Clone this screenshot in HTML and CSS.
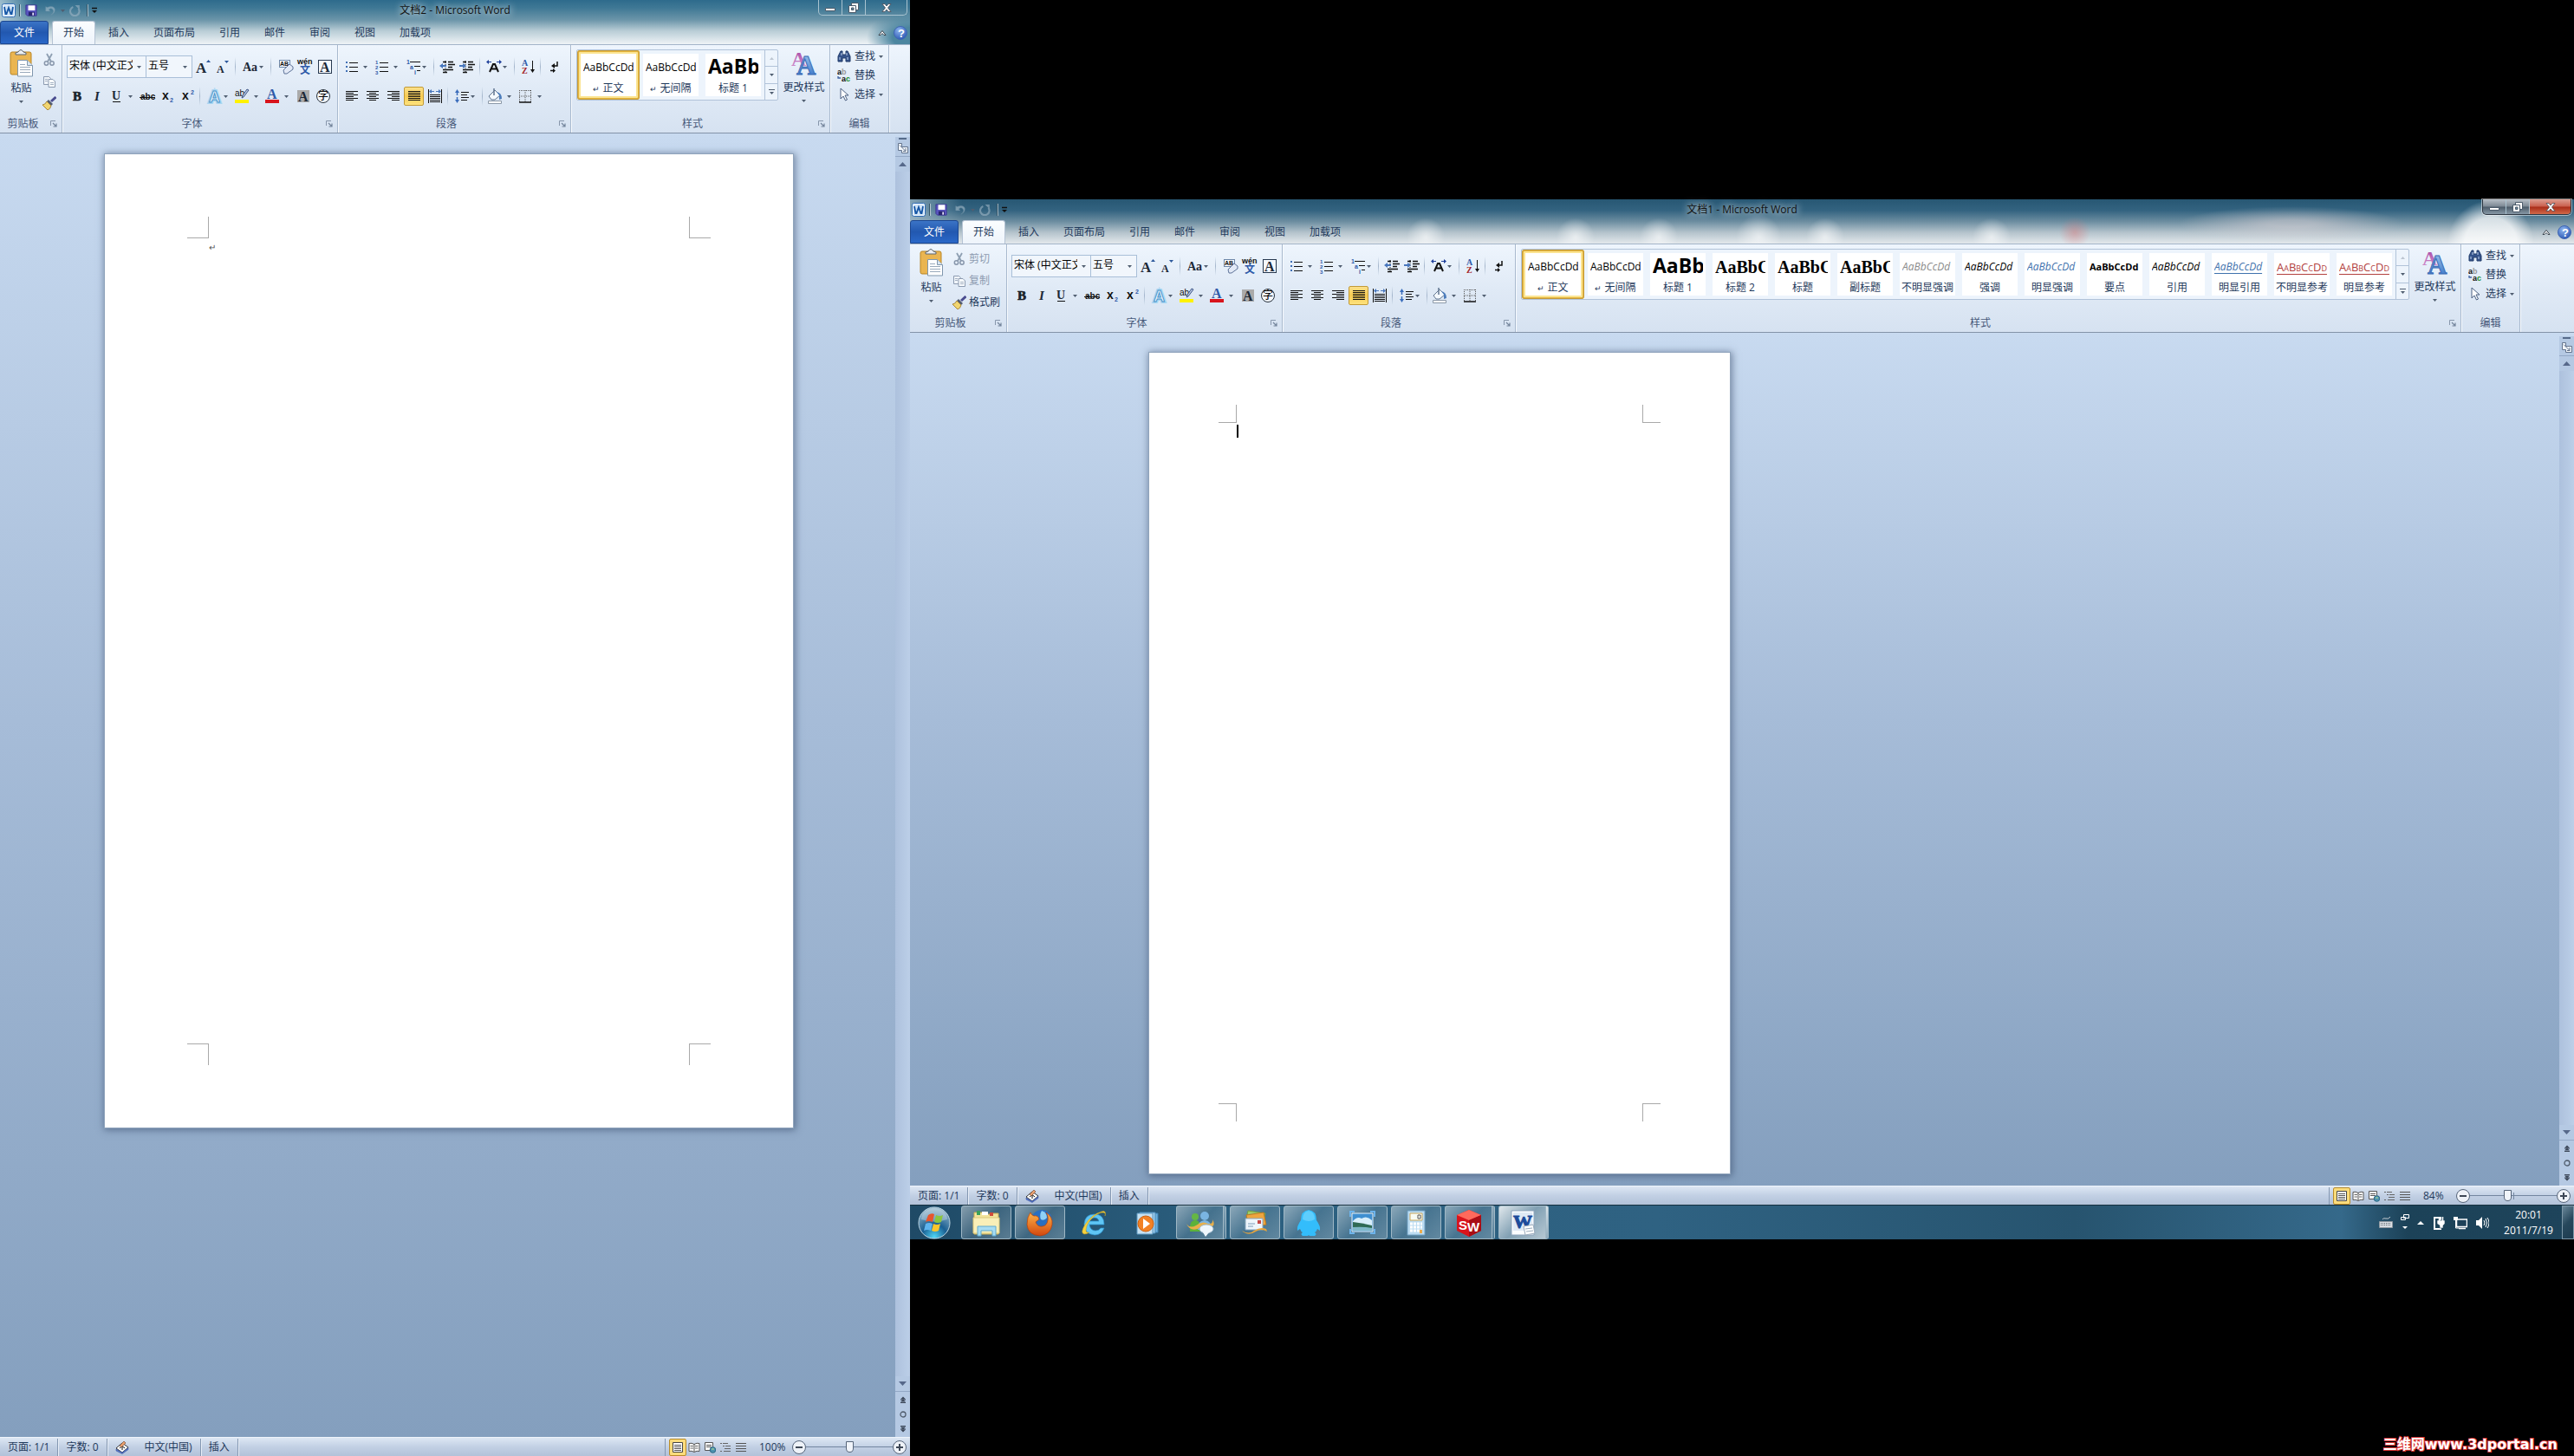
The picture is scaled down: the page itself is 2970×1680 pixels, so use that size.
FILE: index.html
```html
<!DOCTYPE html>
<html lang="zh-CN">
<head>
	<meta charset="utf-8">
	<title>Microsoft Word</title>
	<link rel="stylesheet" href="styles.css">
</head>
<body>
	<!-- Shared icons -->
	<svg class="defs" width="0" height="0">
		<defs>
			<linearGradient id="g-blue" x1="0" y1="0" x2="0" y2="1"><stop offset="0" stop-color="#a9cdf0"/><stop offset="1" stop-color="#2c6cc4"/></linearGradient>
			<linearGradient id="g-purple" x1="0" y1="0" x2="0" y2="1"><stop offset="0" stop-color="#a33fa0"/><stop offset="1" stop-color="#d79bd4"/></linearGradient>
			<linearGradient id="g-orange" x1="0" y1="0" x2="0" y2="1"><stop offset="0" stop-color="#ffb347"/><stop offset="1" stop-color="#d2470e"/></linearGradient>
			<radialGradient id="g-orb" cx=".5" cy=".95" r=".9"><stop offset="0" stop-color="#4fd6f7"/><stop offset=".45" stop-color="#1a5f92"/><stop offset="1" stop-color="#8fb3c8"/></radialGradient>
			<radialGradient id="g-help" cx=".4" cy=".3" r=".8"><stop offset="0" stop-color="#8fb6f0"/><stop offset="1" stop-color="#2350ae"/></radialGradient>
			<symbol id="caret" viewBox="0 0 5 3"><path d="M0 0h5L2.5 3z" fill="#4f5d70"/></symbol>
			<symbol id="word" viewBox="0 0 16 16"><rect x=".5" y=".5" width="15" height="15" rx="2" fill="#f4f9fe" stroke="#2f6cb5"/><rect x="2" y="2" width="12" height="12" fill="#cfe3f6"/><path d="M3 4l1.500 8h1L8 5l2.500 7h1L13 4" fill="none" stroke="#1556a6" stroke-width="1.800"/></symbol>
			<symbol id="save" viewBox="0 0 16 16"><path d="M1 1h14v14H3l-2-2z" fill="#5a55c0" stroke="#3a3690"/><path d="M4 1.500h9V8H4z" fill="#fff"/><path d="M4.500 10h8v5h-8z" fill="#282570"/><path d="M9.500 11h2v3.500h-2z" fill="#e8e8ff"/></symbol>
			<symbol id="undo" viewBox="0 0 16 16"><path d="M2 3v6h6L6 7q3-3 5.500 0t-2.500 7q6-3 5-8-2-5-10-2z" fill="#a9bfcd" stroke="#7f9cb0" stroke-width=".5"/></symbol>
			<symbol id="redo" viewBox="0 0 16 16"><path d="M5 3.500a6 6 0 1 0 7 2" fill="none" stroke="#9db4c4" stroke-width="2.500"/><path d="M7.500 1h6v6z" fill="#9db4c4"/></symbol>
			<symbol id="customize" viewBox="0 0 8 8"><path d="M1 1.500h6" stroke="#111" stroke-width="1.500"/><path d="M1 4h6L4 7z" fill="#111"/></symbol>
			<symbol id="paste" viewBox="0 0 28 32"><rect x="1" y="3" width="24" height="26" rx="2" fill="#eab551" stroke="#b98524"/><path d="M7 6V4l3-1q3-5 6 0l3 1v2z" fill="#eceff3" stroke="#5b6470"/><path d="M9.500 12.500h11l6 6V31h-17z" fill="#fff" stroke="#7f96ad"/><path d="M20.500 12.500v6h6" fill="#d9e5f1" stroke="#7f96ad"/><path d="M12 17.500h6M12 20.500h12M12 23.500h12M12 26.500h12" stroke="#9aaabc"/></symbol>
			<symbol id="cut" viewBox="0 0 16 16"><path d="M5 1l5 9M11 1L6 10" stroke="#8e9fb2" stroke-width="1.800"/><circle cx="4.500" cy="12" r="2.200" fill="none" stroke="#8796ab" stroke-width="1.500"/><circle cx="11" cy="12" r="2.200" fill="none" stroke="#8796ab" stroke-width="1.500"/></symbol>
			<symbol id="copy" viewBox="0 0 16 16"><path d="M1.500 2.500h6l2 2v7h-8z" fill="#f0f4f9" stroke="#8c9bb0"/><path d="M7 5.500h5l2.500 2.500v6.500H7z" fill="#f7fafd" stroke="#8c9bb0"/><path d="M3 5.500h3M3 7.500h3M9 9.500h4M9 11.500h4" stroke="#a5b2c2"/></symbol>
			<symbol id="brush" viewBox="0 0 16 16"><path d="M15.500 1L10 6" stroke="#4a4c8f" stroke-width="3"/><path d="M7 4l5 5-2 2-5-5z" fill="#555d70"/><path d="M5 6l5 5q-1 4-4 5l-6-6q3 0 5-4z" fill="#f1d570" stroke="#a8863a"/></symbol>
			<symbol id="grow" viewBox="0 0 20 20"><text x="2" y="17" class="serif" font-size="17" font-weight="700">A</text><path d="M14 5h5l-2.500-3z" fill="#2b579a"/></symbol>
			<symbol id="shrink" viewBox="0 0 20 20"><text x="3" y="17" class="serif" font-size="12" font-weight="700">A</text><path d="M12 3h5l-2.500 3z" fill="#2b579a"/></symbol>
			<symbol id="case" viewBox="0 0 20 20"><text x="1" y="15" class="serif" font-size="14" font-weight="700">Aa</text></symbol>
			<symbol id="clear" viewBox="0 0 20 20"><rect x="3.500" y="2.500" width="12" height="8" fill="#f8fbff" stroke="#6d86a8"/><text x="4" y="9" class="sans" font-size="7" font-weight="700">AB</text><path d="M8 14l7-7 4 3v3l-7 5h-3z" fill="#e2e9f6" stroke="#5e7398"/></symbol>
			<symbol id="wen" viewBox="0 0 20 20"><text x="1" y="7" class="sans" font-size="9" font-weight="700">wén</text><text x="4" y="18" class="cjk blue" font-size="12" font-weight="700">文</text></symbol>
			<symbol id="frame" viewBox="0 0 20 20"><rect x="2.500" y="2.500" width="15" height="15" fill="#f4f8fd" stroke="#27384f"/><text x="4" y="16" class="serif" font-size="16" font-weight="700">A</text></symbol>
			<symbol id="bold" viewBox="0 0 20 20"><text x="5" y="15" class="serif" font-size="15" font-weight="700" stroke="#111" stroke-width=".6">B</text></symbol>
			<symbol id="italic" viewBox="0 0 20 20"><text x="7" y="15" class="serif" font-size="15" font-weight="700" font-style="italic">I</text></symbol>
			<symbol id="underline" viewBox="0 0 20 20"><text x="5" y="14" class="serif" font-size="14" font-weight="700">U</text><path d="M6 16.500h9" stroke="#111"/></symbol>
			<symbol id="strike" viewBox="0 0 20 20"><text x="2" y="14" class="sans" font-size="10" font-weight="700">abc</text><path d="M1 11.500h18" stroke="#111"/></symbol>
			<symbol id="sub" viewBox="0 0 20 20"><text x="4" y="14" class="sans" font-size="14" font-weight="700">x</text><text x="13" y="17" class="sans blue" font-size="7" font-weight="700">2</text></symbol>
			<symbol id="sup" viewBox="0 0 20 20"><text x="4" y="14" class="sans" font-size="14" font-weight="700">x</text><text x="14" y="8" class="sans blue" font-size="7" font-weight="700">2</text></symbol>
			<symbol id="effect" viewBox="0 0 20 20"><text x="3" y="17" class="sans glow" font-size="18" font-weight="700">A</text><text x="3" y="17" class="sans outline" font-size="18" font-weight="700">A</text></symbol>
			<symbol id="marker" viewBox="0 0 20 20"><text x="2" y="10" class="sans" font-size="10">ab</text><path d="M18 3l-6 8-2 1 1-3 5-7z" fill="#b9c9e4" stroke="#3e5585"/><path d="M2 14h16v4H2z" fill="#fff200"/></symbol>
			<symbol id="color" viewBox="0 0 20 20"><text x="4" y="13" class="serif blue" font-size="16" font-weight="700">A</text><path d="M2 14h16v4H2z" fill="#d8141c"/></symbol>
			<symbol id="shade" viewBox="0 0 20 20"><path d="M3 3h14v14H3z" fill="#aaa"/><text x="4" y="16" class="serif" font-size="16" font-weight="700">A</text></symbol>
			<symbol id="circle" viewBox="0 0 20 20"><circle cx="10" cy="10" r="7.500" fill="#f4f8fd" stroke="#27303b"/><text x="4" y="14" class="cjk" font-size="12" font-weight="500">字</text></symbol>
			<symbol id="bullets" viewBox="0 0 20 20"><path d="M8 5.500h10M8 10.500h10M8 15.500h10" stroke="#111"/><path d="M4 4h2v2H4zM4 9h2v2H4zM4 14h2v2H4z" fill="#3f6fb5"/></symbol>
			<symbol id="numbers" viewBox="0 0 20 20"><path d="M8 5.500h10M8 10.500h10M8 15.500h10" stroke="#111"/><g class="sans blue" font-size="6" font-weight="700"><text x="3" y="7">1</text><text x="3" y="13">2</text><text x="3" y="19">3</text></g></symbol>
			<symbol id="levels" viewBox="0 0 20 20"><path d="M6 4.500h12M11 9.500h7M14 14.500h4" stroke="#111"/><g class="sans blue" font-size="7" font-weight="700"><text x="2" y="7">1</text><text x="6" y="13">a</text><text x="11" y="19">i</text></g></symbol>
			<symbol id="dedent" viewBox="0 0 20 20"><path d="M5 4.500h4M11 4.500h6M11 7.500h8M11 10.500h5M5 13.500h12M5 16.500h5" stroke="#111" stroke-width="1.300"/><path d="M8 3v14" stroke="#111" stroke-dasharray="1 1"/><path d="M1 9l4-3v2h4v2H5v2z" fill="#4877bd"/></symbol>
			<symbol id="indent" viewBox="0 0 20 20"><path d="M5 4.500h4M11 4.500h6M11 7.500h8M11 10.500h5M5 13.500h12M5 16.500h5" stroke="#111" stroke-width="1.300"/><path d="M8 3v14" stroke="#111" stroke-dasharray="1 1"/><path d="M9 9L5 6v2H1v2h4v2z" fill="#4877bd"/></symbol>
			<symbol id="scale" viewBox="0 0 20 20"><path d="M5 16l4-9h2l4 9M7 12.500h6" fill="none" stroke="#111" stroke-width="2"/><path d="M2 4.500h5M13 4.500h5" stroke="#1f3f9a"/><path d="M1 4.500L4 2v5zM19 4.500L16 2v5z" fill="#1f3f9a"/></symbol>
			<symbol id="sort" viewBox="0 0 20 20"><text x="3" y="9" class="serif blue" font-size="10" font-weight="700">A</text><text x="3" y="18" class="serif red" font-size="10" font-weight="700">Z</text><path d="M15.500 3v13" stroke="#111"/><path d="M13 13h5l-2.500 4z" fill="#111"/></symbol>
			<symbol id="marks" viewBox="0 0 20 20"><path d="M14 4v5H9M6 14.500h5" fill="none" stroke="#111" stroke-width="1.500"/><path d="M7 9l4-3v6zM12 14.500L9 12v5z" fill="#111"/></symbol>
			<symbol id="left" viewBox="0 0 20 20"><path d="M3 4.500h14M3 6.500h9M3 8.500h14M3 10.500h9M3 12.500h14M3 14.500h9" stroke="#111"/></symbol>
			<symbol id="center" viewBox="0 0 20 20"><path d="M3 4.500h14M6 6.500h8M3 8.500h14M6 10.500h8M3 12.500h14M6 14.500h8" stroke="#111"/></symbol>
			<symbol id="right" viewBox="0 0 20 20"><path d="M3 4.500h14M8 6.500h9M3 8.500h14M8 10.500h9M3 12.500h14M8 14.500h9" stroke="#111"/></symbol>
			<symbol id="justify" viewBox="0 0 20 20"><path d="M3 4.500h14M3 6.500h14M3 8.500h14M3 10.500h14M3 12.500h14M3 14.500h14" stroke="#111"/></symbol>
			<symbol id="distribute" viewBox="0 0 20 20"><path d="M4 8.500h12M4 10.500h12M4 12.500h12M4 14.500h12M4 16.500h12M2.500 2v16M17.500 2v16" stroke="#111"/><path d="M5 4.500h4M11 4.500h4" stroke="#4877bd"/><path d="M3 4.500L6 2v5zM17 4.500L14 2v5z" fill="#4877bd"/></symbol>
			<symbol id="spacing" viewBox="0 0 20 20"><path d="M9 5.500h9M9 8.500h7M9 11.500h9M9 14.500h7" stroke="#111"/><path d="M4.500 5v10" stroke="#3b6dbb" stroke-width="1.500" stroke-dasharray="4 2"/><path d="M2 6l2.500-4L7 6zM2 14l2.500 4L7 14z" fill="#3b6dbb"/></symbol>
			<symbol id="bucket" viewBox="0 0 20 20"><path d="M3 10l7-7 6 6-6 5H6z" fill="#f4f9ff" stroke="#61758f"/><path d="M9 1v8" stroke="#61758f" stroke-width="1.500"/><path d="M12 5q6 1 6 8l-3 1V9z" fill="#4d7dbb"/><path d="M2.500 15.500h15v3h-15z" fill="#fff" stroke="#8b98a8"/></symbol>
			<symbol id="borders" viewBox="0 0 20 20"><path d="M3.500 3v13M10 3v13M16.500 3v13M3 3.500h14M3 10h14" stroke="#555" stroke-dasharray="1 1"/><path d="M3 17h14" stroke="#111" stroke-width="1.500"/></symbol>
			<symbol id="launcher" viewBox="0 0 8 8"><path d="M.5 6V.5H6" fill="none" stroke="#8796ab"/><path d="M3 3l4 4M7 3.500V7H3.500" fill="none" stroke="#74859c" stroke-width="1.200"/></symbol>
			<symbol id="styles" viewBox="0 0 30 30"><text x="0" y="18" class="serif purple" font-size="24" font-weight="700">A</text><text x="6" y="28" class="serif azure" font-size="31" font-weight="700">A</text></symbol>
			<symbol id="find" viewBox="0 0 16 16"><path d="M1 14V8l3-6h2v4h4V2h2l3 6v6h-5v-4H6v4z" fill="#35538a" stroke="#233c6b"/><path d="M3 9v3M12 9v3M5 4v3M11 4v3" stroke="#c4d6f2"/></symbol>
			<symbol id="replace" viewBox="0 0 16 16"><g class="sans" font-size="9" font-weight="700"><text x="0" y="7">a</text><text x="5" y="7" class="dim">b</text><text x="5" y="15">a</text><text x="10" y="15" class="green">c</text></g><path d="M1 9v2h3" fill="none" stroke="#3b5f9f" stroke-width="1.300"/></symbol>
			<symbol id="pointer" viewBox="0 0 16 16"><path d="M4 1v12l3-3 2.500 5 2-1-2.500-5h4z" fill="#fff" stroke="#4a5f80"/></symbol>
			<symbol id="help" viewBox="0 0 16 16"><circle cx="8" cy="8" r="7.500" fill="url(#g-help)" stroke="#3f66b3"/><text x="5" y="13" class="white" font-size="13" font-weight="700">?</text></symbol>
			<symbol id="chevron" viewBox="0 0 10 8"><path d="M1 6.500l4-5 4 5H7l-2-2-2 2z" fill="#fff" stroke="#39434d"/></symbol>
			<symbol id="min" viewBox="0 0 12 12"><path d="M.5 6.500h11v3H.5z" fill="#fff" stroke="#4a5a6a"/></symbol>
			<symbol id="restore" viewBox="0 0 12 12"><path d="M3.500.500h8v8h-8z" fill="#fff" stroke="#4a5a6a"/><path d="M.5 3.500h8v8h-8z" fill="#fff" stroke="#4a5a6a"/><path d="M3.500 6h2.500v2.500H3.500z" fill="#6b8ba0" stroke="#4a5a6a"/></symbol>
			<symbol id="close" viewBox="0 0 12 12"><path d="M1 1.500h3l2 2.500 2-2.500h3L7.500 6l3.500 4.500H8L6 8l-2 2.500H1L4.500 6z" fill="#fff" stroke="#4a4a55" stroke-width=".8"/></symbol>
			<symbol id="ruler" viewBox="0 0 12 12"><path d="M.5.500h4v4h7v7h-7v-3h-4z" fill="#f4f8fd" stroke="#62738c"/><path d="M2 2.500l7 7M9 6v3.500H6" stroke="#62738c" fill="none"/></symbol>
			<symbol id="up" viewBox="0 0 9 5"><path d="M0 5h9L4.500 0z" fill="#56688a"/></symbol>
			<symbol id="down" viewBox="0 0 9 5"><path d="M0 0h9L4.500 5z" fill="#56688a"/></symbol>
			<symbol id="prev" viewBox="0 0 8 8"><path d="M1 3.500h6L4 .5zM1 6.500h6L4 3.500z" fill="#3c4758"/><path d="M1 4h6M1 7.500h6" stroke="#3c4758"/></symbol>
			<symbol id="next" viewBox="0 0 8 8"><path d="M1 1.500h6l-3 3zM1 4.500h6l-3 3z" fill="#3c4758"/><path d="M1 .500h6M1 4h6" stroke="#3c4758"/></symbol>
			<symbol id="ball" viewBox="0 0 8 8"><circle cx="4" cy="4" r="3" fill="none" stroke="#4f5b6b" stroke-width="1.300"/></symbol>
			<symbol id="proof" viewBox="0 0 16 16"><path d="M1 9l7-6 7 5-7 6z" fill="#fff" stroke="#333"/><path d="M1 10v2l7 3.500 7-5V8.500l-7 5.500z" fill="#5a78c8" stroke="#2f4b9a" stroke-width=".5"/><path d="M5 9l3-2.500L11 9M8 6.500V11" stroke="#111" fill="none"/><path d="M5 6l5-5 2 2-5 5z" fill="#e8a070" stroke="#6b3a20" stroke-width=".6"/></symbol>
			<symbol id="v-print" viewBox="0 0 14 14"><path d="M1.500 1.500h11v11h-11z" fill="#fff" stroke="#444"/><path d="M3 4.500h8M3 6.500h8M3 8.500h8M3 10.500h8" stroke="#555"/></symbol>
			<symbol id="v-read" viewBox="0 0 14 14"><path d="M1 2.500q3-1 6 1 3-2 6-1v9q-3-1-6 1-3-2-6-1zM7 3v9" fill="#fff" stroke="#555"/><path d="M2.500 5.500H6M2.500 8H6M8 5.500h3.500M8 8h3.500" stroke="#666"/></symbol>
			<symbol id="v-web" viewBox="0 0 14 14"><path d="M1.500 1.500h9v9h-9z" fill="#fff" stroke="#555"/><path d="M3 4.500h6M3 6.500h6" stroke="#555"/><circle cx="10.500" cy="10" r="3.300" fill="#4d93b0" stroke="#2b6785"/><path d="M9 9h3" stroke="#b8e08c"/></symbol>
			<symbol id="v-outline" viewBox="0 0 14 14"><path d="M1 2.500h2M4 2.500h6M4 5.500h2M7 5.500h6M6 8.500h7M1 11.500h2M5 11.500h8" stroke="#666"/></symbol>
			<symbol id="v-draft" viewBox="0 0 14 14"><path d="M1 2.500h12M1 5.500h12M1 8.500h12M1 11.500h12" stroke="#555"/></symbol>
		</defs>
	</svg>

	<!-- Parts that both windows share -->
	<template id="quick">
		<div class="quick">
			<svg class="i16"><use href="#word"/></svg><i class="bar"></i>
			<button class="q" aria-label="保存"><svg class="i14"><use href="#save"/></svg></button>
			<button class="q" disabled aria-label="撤消"><svg class="i14"><use href="#undo"/></svg></button>
			<svg class="caret"><use href="#caret"/></svg>
			<button class="q" disabled aria-label="重复"><svg class="i14"><use href="#redo"/></svg></button>
			<i class="bar"></i><button class="q slim" aria-label="自定义"><svg class="i8"><use href="#customize"/></svg></button>
		</div>
	</template>
	<template id="sys">
		<button aria-label="最小化"><svg class="i12"><use href="#min"/></svg></button>
		<button aria-label="还原"><svg class="i12"><use href="#restore"/></svg></button>
		<button class="x" aria-label="关闭"><svg class="i12"><use href="#close"/></svg></button>
	</template>
	<template id="tabs">
		<nav class="tabs">
			<button class="file">文件</button>
			<button class="tab active">开始</button>
			<button class="tab">插入</button>
			<button class="tab">页面布局</button>
			<button class="tab">引用</button>
			<button class="tab">邮件</button>
			<button class="tab">审阅</button>
			<button class="tab">视图</button>
			<button class="tab">加载项</button>
			<div class="tab-right">
				<button class="q slim" aria-label="功能区最小化"><svg class="chev"><use href="#chevron"/></svg></button>
				<button class="q" aria-label="帮助"><svg class="i16"><use href="#help"/></svg></button>
			</div>
		</nav>
	</template>
	<template id="groups">
		<div class="group font">
			<div class="rows">
				<div class="row">
					<label class="combo face"><select aria-label="字体"><option>宋体 (中文正文)</option></select><svg class="caret"><use href="#caret"/></svg></label>
					<label class="combo size"><select aria-label="字号"><option>五号</option></select><svg class="caret"><use href="#caret"/></svg></label>
					<button class="tool" aria-label="增大字体"><svg><use href="#grow"/></svg></button>
					<button class="tool" aria-label="缩小字体"><svg><use href="#shrink"/></svg></button>
					<i class="sep"></i>
					<button class="tool menu" aria-label="更改大小写"><svg><use href="#case"/></svg><svg class="caret"><use href="#caret"/></svg></button>
					<i class="sep"></i>
					<button class="tool" aria-label="清除格式"><svg><use href="#clear"/></svg></button>
					<button class="tool" aria-label="拼音指南"><svg><use href="#wen"/></svg></button>
					<button class="tool" aria-label="字符边框"><svg><use href="#frame"/></svg></button>
				</div>
				<div class="row">
					<button class="tool" aria-label="加粗"><svg><use href="#bold"/></svg></button>
					<button class="tool" aria-label="倾斜"><svg><use href="#italic"/></svg></button>
					<button class="tool split" aria-label="下划线"><svg><use href="#underline"/></svg><svg class="caret"><use href="#caret"/></svg></button>
					<button class="tool" aria-label="删除线"><svg><use href="#strike"/></svg></button>
					<button class="tool" aria-label="下标"><svg><use href="#sub"/></svg></button>
					<button class="tool" aria-label="上标"><svg><use href="#sup"/></svg></button>
					<i class="sep"></i>
					<button class="tool menu" aria-label="文本效果"><svg><use href="#effect"/></svg><svg class="caret"><use href="#caret"/></svg></button>
					<button class="tool split" aria-label="突出显示"><svg><use href="#marker"/></svg><svg class="caret"><use href="#caret"/></svg></button>
					<button class="tool split" aria-label="字体颜色"><svg><use href="#color"/></svg><svg class="caret"><use href="#caret"/></svg></button>
					<button class="tool" aria-label="字符底纹"><svg><use href="#shade"/></svg></button>
					<button class="tool" aria-label="带圈字符"><svg><use href="#circle"/></svg></button>
				</div>
			</div>
			<div class="label"><span>字体</span><svg class="i8"><use href="#launcher"/></svg></div>
		</div>
		<div class="group para">
			<div class="rows">
				<div class="row">
					<button class="tool split" aria-label="项目符号"><svg><use href="#bullets"/></svg><svg class="caret"><use href="#caret"/></svg></button>
					<button class="tool split" aria-label="编号"><svg><use href="#numbers"/></svg><svg class="caret"><use href="#caret"/></svg></button>
					<button class="tool menu" aria-label="多级列表"><svg><use href="#levels"/></svg><svg class="caret"><use href="#caret"/></svg></button>
					<i class="sep"></i>
					<button class="tool" aria-label="减少缩进量"><svg><use href="#dedent"/></svg></button>
					<button class="tool" aria-label="增加缩进量"><svg><use href="#indent"/></svg></button>
					<i class="sep"></i>
					<button class="tool menu" aria-label="中文版式"><svg><use href="#scale"/></svg><svg class="caret"><use href="#caret"/></svg></button>
					<i class="sep"></i>
					<button class="tool" aria-label="排序"><svg><use href="#sort"/></svg></button>
					<i class="sep"></i>
					<button class="tool" aria-label="显示编辑标记"><svg><use href="#marks"/></svg></button>
				</div>
				<div class="row">
					<div class="align">
						<button class="tool" aria-label="左对齐"><svg><use href="#left"/></svg></button>
						<button class="tool" aria-label="居中"><svg><use href="#center"/></svg></button>
						<button class="tool" aria-label="右对齐"><svg><use href="#right"/></svg></button>
						<button class="tool on" aria-label="两端对齐"><svg><use href="#justify"/></svg></button>
						<button class="tool" aria-label="分散对齐"><svg><use href="#distribute"/></svg></button>
					</div>
					<i class="sep"></i>
					<button class="tool menu" aria-label="行距"><svg><use href="#spacing"/></svg><svg class="caret"><use href="#caret"/></svg></button>
					<i class="sep"></i>
					<button class="tool split" aria-label="底纹"><svg><use href="#bucket"/></svg><svg class="caret"><use href="#caret"/></svg></button>
					<button class="tool split" aria-label="边框"><svg><use href="#borders"/></svg><svg class="caret"><use href="#caret"/></svg></button>
				</div>
			</div>
			<div class="label"><span>段落</span><svg class="i8"><use href="#launcher"/></svg></div>
		</div>
	</template>
	<template id="scroller">
		<div class="scroller">
			<button disabled aria-label="上一行"><svg class="caret flip"><use href="#caret"/></svg></button>
			<button aria-label="下一行"><svg class="caret"><use href="#caret"/></svg></button>
			<button class="more" aria-label="其他"><svg class="caret"><use href="#caret"/></svg></button>
		</div>
	</template>
	<template id="change">
		<button class="big change"><svg class="i30"><use href="#styles"/></svg><span>更改样式</span><svg class="caret"><use href="#caret"/></svg></button>
	</template>
	<template id="edit">
		<div class="group edit">
			<div class="body list">
				<button><svg class="i16"><use href="#find"/></svg>查找<svg class="caret"><use href="#caret"/></svg></button>
				<button><svg class="i16"><use href="#replace"/></svg>替换</button>
				<button><svg class="i16"><use href="#pointer"/></svg>选择<svg class="caret"><use href="#caret"/></svg></button>
			</div>
			<div class="label"><span>编辑</span></div>
		</div>
	</template>
	<template id="vscroll">
		<div class="vscroll">
			<div class="split-bar"></div>
			<button class="ruler" aria-label="标尺"><svg class="i12"><use href="#ruler"/></svg></button>
			<button aria-label="向上滚动"><svg class="arrow"><use href="#up"/></svg></button>
			<div class="track"></div>
			<button aria-label="向下滚动"><svg class="arrow"><use href="#down"/></svg></button>
			<div class="browse">
				<button aria-label="前一页"><svg class="i8"><use href="#prev"/></svg></button>
				<button aria-label="选择浏览对象"><svg class="i8"><use href="#ball"/></svg></button>
				<button aria-label="下一页"><svg class="i8"><use href="#next"/></svg></button>
			</div>
		</div>
	</template>
	<template id="info">
		<span class="cell">页面: 1/1</span>
		<span class="cell">字数: 0</span>
		<span class="cell lang"><svg class="i16"><use href="#proof"/></svg>中文(中国)</span>
		<span class="cell">插入</span>
		<div class="views">
			<button class="on" aria-label="页面视图"><svg class="i14"><use href="#v-print"/></svg></button>
			<button aria-label="阅读版式"><svg class="i14"><use href="#v-read"/></svg></button>
			<button aria-label="Web 版式"><svg class="i14"><use href="#v-web"/></svg></button>
			<button aria-label="大纲"><svg class="i14"><use href="#v-outline"/></svg></button>
			<button aria-label="草稿"><svg class="i14"><use href="#v-draft"/></svg></button>
		</div>
	</template>

	<div class="desktop">
		<!-- Left monitor -->
		<section class="window">
			<header class="titlebar">
				<div class="caption">
					<div data-part="quick"></div>
					<h1>文档2 - Microsoft Word</h1>
					<div class="sys"><div data-part="sys"></div></div>
				</div>
				<div data-part="tabs"></div>
			</header>

			<div class="ribbon">
				<div class="group clipboard">
					<div class="body">
						<button class="big"><svg class="paste"><use href="#paste"/></svg><span>粘贴</span><svg class="caret"><use href="#caret"/></svg></button>
						<div class="stack">
							<button disabled aria-label="剪切"><svg class="i16"><use href="#cut"/></svg></button>
							<button disabled aria-label="复制"><svg class="i16"><use href="#copy"/></svg></button>
							<button aria-label="格式刷"><svg class="i16"><use href="#brush"/></svg></button>
						</div>
					</div>
					<div class="label"><span>剪贴板</span><svg class="i8"><use href="#launcher"/></svg></div>
				</div>
				<div data-part="groups"></div>
				<div class="group styles">
					<div class="body">
						<div class="gallery">
							<button class="style on"><span class="card"><b class="s-normal">AaBbCcDd</b><span><small>↵</small> 正文</span></span></button>
							<button class="style"><span class="card"><b class="s-normal">AaBbCcDd</b><span><small>↵</small> 无间隔</span></span></button>
							<button class="style"><span class="card"><b class="s-h1">AaBb</b><span>标题 1</span></span></button>
							<div data-part="scroller"></div>
						</div>
						<div data-part="change"></div>
					</div>
					<div class="label"><span>样式</span><svg class="i8"><use href="#launcher"/></svg></div>
				</div>
				<div data-part="edit"></div>
			</div>

			<div class="workspace">
				<main class="canvas">
					<article class="page">
						<i class="mark tl"></i><i class="mark tr"></i>
						<p class="pilcrow">↵</p>
						<i class="mark bl"></i><i class="mark br"></i>
					</article>
				</main>
				<div data-part="vscroll"></div>
			</div>

			<footer class="status">
				<div data-part="info"></div>
				<span class="percent">100%</span>
				<button class="round minus" aria-label="缩小"></button>
				<input class="zoom" type="range" min="0" max="100" value="50" aria-label="显示比例">
				<button class="round plus" aria-label="放大"></button>
			</footer>
		</section>

		<!-- Right monitor -->
		<div class="monitor">
			<div class="screen">
				<section class="window wide">
					<header class="titlebar glass">
						<div class="caption">
							<div data-part="quick"></div>
							<h1>文档1 - Microsoft Word</h1>
							<div class="sys active"><div data-part="sys"></div></div>
						</div>
						<div data-part="tabs"></div>
					</header>

					<div class="ribbon">
						<div class="group clipboard">
							<div class="body">
								<button class="big"><svg class="paste"><use href="#paste"/></svg><span>粘贴</span><svg class="caret"><use href="#caret"/></svg></button>
								<div class="stack">
									<button disabled><svg class="i16"><use href="#cut"/></svg>剪切</button>
									<button disabled><svg class="i16"><use href="#copy"/></svg>复制</button>
									<button><svg class="i16"><use href="#brush"/></svg>格式刷</button>
								</div>
							</div>
							<div class="label"><span>剪贴板</span><svg class="i8"><use href="#launcher"/></svg></div>
						</div>
						<div data-part="groups"></div>
						<div class="group styles">
							<div class="body">
								<div class="gallery">
									<button class="style on"><span class="card"><b class="s-normal">AaBbCcDd</b><span><small>↵</small> 正文</span></span></button>
									<button class="style"><span class="card"><b class="s-normal">AaBbCcDd</b><span><small>↵</small> 无间隔</span></span></button>
									<button class="style"><span class="card"><b class="s-h1">AaBb</b><span>标题 1</span></span></button>
									<button class="style"><span class="card"><b class="s-h2">AaBbC</b><span>标题 2</span></span></button>
									<button class="style"><span class="card"><b class="s-h2">AaBbC</b><span>标题</span></span></button>
									<button class="style"><span class="card"><b class="s-h2">AaBbC</b><span>副标题</span></span></button>
									<button class="style"><span class="card"><b class="s-it gray">AaBbCcDd</b><span>不明显强调</span></span></button>
									<button class="style"><span class="card"><b class="s-it">AaBbCcDd</b><span>强调</span></span></button>
									<button class="style"><span class="card"><b class="s-it navy">AaBbCcDd</b><span>明显强调</span></span></button>
									<button class="style"><span class="card"><b class="s-strong">AaBbCcDd</b><span>要点</span></span></button>
									<button class="style"><span class="card"><b class="s-it">AaBbCcDd</b><span>引用</span></span></button>
									<button class="style"><span class="card"><b class="s-it navy line">AaBbCcDd</b><span>明显引用</span></span></button>
									<button class="style"><span class="card"><b class="s-caps line">AaBbCcDd</b><span>不明显参考</span></span></button>
									<button class="style"><span class="card"><b class="s-caps line">AaBbCcDd</b><span>明显参考</span></span></button>
									<div data-part="scroller"></div>
								</div>
								<div data-part="change"></div>
							</div>
							<div class="label"><span>样式</span><svg class="i8"><use href="#launcher"/></svg></div>
						</div>
						<div data-part="edit"></div>
					</div>

					<div class="workspace">
						<main class="canvas two-up">
							<article class="page small">
								<i class="mark tl"></i><i class="mark tr"></i>
								<p class="pilcrow"><i class="cursor"></i></p>
								<i class="mark bl"></i><i class="mark br"></i>
							</article>
							<div class="slot"></div>
						</main>
						<div data-part="vscroll"></div>
					</div>

					<footer class="status">
						<div data-part="info"></div>
						<span class="percent">84%</span>
						<button class="round minus" aria-label="缩小"></button>
						<input class="zoom tick" type="range" min="0" max="100" value="43" aria-label="显示比例">
						<button class="round plus" aria-label="放大"></button>
					</footer>
				</section>

				<!-- Taskbar -->
				<div class="taskbar">
					<button class="start" aria-label="开始"><svg viewBox="0 0 38 38"><circle cx="19" cy="19" r="18" fill="url(#g-orb)" stroke="#bcd5e3"/><path d="M4 15a15 13 0 0 1 30 0q-15 5-30 0" fill="#fff" opacity=".3"/><path d="M12 10q4-3 7-1l-2 9q-4-2-8 0z" fill="#e8552d"/><path d="M21 10q4 2 8 0l-2 8q-4 2-8 0z" fill="#8cc63f"/><path d="M9 20q4-2 8 0l-2 8q-4-2-8 0z" fill="#5fb4ee"/><path d="M18 20q4 2 8 0l-2 8q-4 2-8 0z" fill="#fbc52c"/></svg></button>
					<button class="task" aria-label="资源管理器"><svg viewBox="0 0 32 32"><path d="M2 4h9l2 2h8l1-1h8v24H2z" fill="#f2e39b" stroke="#c9ad55"/><path d="M5 2h4v5H5z" fill="#3aa05a"/><path d="M11 3h7v4h-7z" fill="#fff"/><path d="M20 4h4v4h-4z" fill="#d04c3c"/><path d="M1 10h30v18H1z" fill="#f9efb8" stroke="#dcc878"/><path d="M6 31V20h21v11h-4v-6H10v6z" fill="#a6dcf3" stroke="#5fa9cf"/></svg></button>
					<button class="task" aria-label="Firefox"><svg viewBox="0 0 32 32"><circle cx="18" cy="13" r="12" fill="#2a6fc0"/><path d="M18 2q6 2 6 8-3 4-7 2-2-5 1-10" fill="#8fd0f5"/><path d="M5 4q1 3 4 4 5-1 6 4l-4 3q2 6 8 5 5-1 6-7 1-5-2-9 8 5 7 14-2 12-14 13Q2 30 1 18 1 9 5 4z" fill="url(#g-orange)" stroke="#b53c08" stroke-width=".7"/></svg></button>
					<button class="task plain" aria-label="Internet Explorer"><svg viewBox="0 0 32 32"><path d="M28 18H11q1 7 7 7 4 0 6-3h4q-3 8-11 8-12-1-12-13Q6 6 17 6t11 12zm-6-4q-1-4-5-4t-6 4z" fill="#5fc6f5" stroke="#2d8fcb" stroke-width=".7"/><path d="M29 8q2-7-4-5Q14 6 6 18q-6 10-1 11 3 0 6-2-4 1-4-3 1-9 10-16 9-6 12-3 1 1 0 3z" fill="#f7d23c" stroke="#c99f1c" stroke-width=".5"/></svg></button>
					<button class="task plain" aria-label="媒体播放器"><svg viewBox="0 0 32 32"><path d="M10 5h18v22H10z" fill="#6cb0dd" stroke="#3f81b3"/><path d="M7 4h18v24H7z" fill="#9ccbea" stroke="#4a8cbc"/><path d="M4 5h18v24H4z" fill="#c6e1f2" stroke="#5b97c0"/><circle cx="14" cy="17" r="9" fill="#f28124" stroke="#cf5f0d"/><path d="M11 11l8 6-8 6z" fill="#fff"/></svg></button>
					<button class="task many" aria-label="Messenger"><svg viewBox="0 0 32 32"><circle cx="10" cy="9" r="4" fill="#65b644"/><path d="M4 26q-1-13 6-13t6 13z" fill="#5bb23b"/><circle cx="21" cy="8" r="5" fill="#7ab5e2"/><path d="M13 24q0-11 8-11t7 11z" fill="#7ab5e2"/><path d="M0 17q4 6 11 2 7-6 14-2 6 1 5-5 5 9-5 9-8-2-12 2-9 3-13-6z" fill="#e9b04a"/><ellipse cx="23" cy="23" rx="8" ry="5" fill="#eef6fc" stroke="#9db8cb"/><path d="M19 27l3 5 4-5z" fill="#eef6fc"/></svg></button>
					<button class="task" aria-label="邮件"><svg viewBox="0 0 32 32"><path d="M8 2l20 3-3 14L5 16z" fill="#9ecb6a" stroke="#6f9f42"/><path d="M6 7l20-3 3 14-20 3z" fill="#eda53f" stroke="#bb7722"/><path d="M5 11h20v13H5z" fill="#eef5fb" stroke="#86a6c0"/><path d="M19 13h4v4h-4z" fill="#c54848"/><path d="M8 17h8M8 20h6" stroke="#7a9cb8"/><path d="M1 25q8 5 14 0 8-5 14-2l1 3q-7-4-13 0-9 6-16-1z" fill="#e8a53c"/></svg></button>
					<button class="task" aria-label="QQ"><svg viewBox="0 0 32 32"><path d="M16 1q9 1 9 12 5 7 4 12l-3-2q-1 3-3 4 3 2 0 4h-6l-1-1-1 1H9q-3-2 0-4-2-1-3-4l-3 2q-1-5 4-12Q7 2 16 1z" fill="#33bdfb"/><path d="M16 2q7 1 7 10-7 4-14 0 0-9 7-10z" fill="#7cd8ff" opacity=".6"/></svg></button>
					<button class="task" aria-label="图片"><svg viewBox="0 0 32 32"><path d="M4 5h24v21H4z" fill="#3f8fd0" stroke="#e8f3fa"/><path d="M5 14q5-6 10-3 6-4 12 2v6H5z" fill="#d8eefa"/><path d="M5 15q10 1 22 4v6H5z" fill="#2f6b55"/><path d="M5 21q12-1 22 1v3H5z" fill="#7fb8c8"/><path d="M2 9V3h5M25 3h5v6M30 23v5h-5M7 28H2v-5" fill="none" stroke="#6db4ec" stroke-width="2"/></svg></button>
					<button class="task" aria-label="计算器"><svg viewBox="0 0 32 32"><path d="M6 2h20v28H6z" fill="#bcdcf2" stroke="#6e9fc2"/><path d="M9 5h14v8H9z" fill="#f8fbf3" stroke="#cfa95c"/><path d="M18 7h3v4h-3z" fill="none" stroke="#555"/><path d="M9 17h14M9 21h14M9 25h14" stroke="#fff" stroke-width="3" stroke-dasharray="3 1"/><path d="M20 24h3v4h-3z" fill="#edad4e"/></svg></button>
					<button class="task many" aria-label="SolidWorks"><svg viewBox="0 0 32 32"><path d="M16 1l14 6v18l-14 7L2 25V7z" fill="#d8141c"/><path d="M16 1l14 6-14 6L2 7z" fill="#ff6a5c"/><path d="M16 13l14-6v18l-14 7z" fill="#a80d14"/><text x="4" y="24" class="white" font-size="15" font-weight="700">S</text><text x="14" y="26" class="white" font-size="15" font-weight="700">W</text></svg></button>
					<button class="task many current" aria-label="Word"><svg viewBox="0 0 32 32"><path d="M3 2h26v28H3z" fill="#fbfdff" stroke="#8fa5bd"/><path d="M5 4h22v21H5z" fill="#dfe9f5"/><text x="5" y="22" class="serif navy-w" font-size="22" font-weight="700">W</text><path d="M17 20l11-2 2 10-11 2z" fill="#fff" stroke="#99aabb"/><path d="M19 23l8-1M20 26l8-1" stroke="#99aabb"/></svg></button>
					<div class="tray">
						<div class="icons">
							<svg class="i16" viewBox="0 0 16 16"><path d="M.5 6.500h15v7H.5z" fill="#d8dde2" stroke="#8d969e"/><path d="M2 8.500h12M2 10.500h12" stroke="#5d666e" stroke-dasharray="1 1"/><path d="M4 4q1-2 4-1t5-2" fill="none" stroke="#c5ccd2"/></svg>
							<svg class="langbar" viewBox="0 0 10 22"><path d="M3.500 1.500h6v4h-6zM.5 4.500h5v3h-5z" fill="#254a63" stroke="#fff"/><path d="M2 15h6l-3 3z" fill="#fff"/></svg>
							<svg class="i8" viewBox="0 0 8 8"><path d="M0 6h8L4 2z" fill="#fff"/></svg>
							<svg class="i16" viewBox="0 0 16 16"><path d="M3 2h7v13H3z" fill="none" stroke="#fff" stroke-width="2"/><path d="M6 5h9v4l-2 2v3H9v-3L6 9z" fill="#fff" stroke="#24455a" stroke-width=".6"/><path d="M8.500 1v5M12.500 1v5" stroke="#fff" stroke-width="1.500"/></svg>
							<svg class="i16" viewBox="0 0 16 16"><path d="M3.500 4h12v8.500h-12z" fill="#1d4158" stroke="#fff" stroke-width="1.500"/><path d="M6 14.500h8" stroke="#fff" stroke-width="1.500"/><path d="M0 1h5v4H0z" fill="#fff"/><path d="M2.500 5v9h4" fill="none" stroke="#fff"/></svg>
							<svg class="i16" viewBox="0 0 16 16"><path d="M1 5h3l4-4v14l-4-4H1z" fill="#fff"/><path d="M10 5q2 3 0 6M12 3q3 5 0 10M14 2q4 6 0 12" fill="none" stroke="#fff"/></svg>
						</div>
						<time class="clock">20:01<br>2011/7/19</time>
						<button class="peek" aria-label="显示桌面"></button>
					</div>
				</div>
			</div>
			<p class="watermark">三维网www.3dportal.cn</p>
		</div>
	</div>

	<script>
		// Fill every placeholder with the template it names
		document.querySelectorAll('[data-part]').forEach(slot => {
			const part = document.getElementById(slot.dataset.part);
			slot.replaceWith(part.content.cloneNode(true));
		});
	</script>
</body>
</html>
```
FILE: styles.css
```css
/* General styles */
* {
	box-sizing: border-box;
}

body {
	margin: 0;
	background: #000;
	color: #1e395b;
	font: 12px/16px "Open Sans", "Noto Sans CJK SC", sans-serif;
}

button, select {
	margin: 0;
	padding: 0;
	border: 0;
	background: none;
	color: inherit;
	font: inherit;
}

svg {
	flex: none;
	display: block;
}

.defs {
	position: absolute;
}

.serif {
	font-family: "Liberation Serif", serif;
	fill: #1c2836;
}

.sans {
	font-family: "Liberation Sans", sans-serif;
	fill: #111;
}

.cjk {
	font-family: "Noto Sans CJK SC", sans-serif;
	fill: #111;
}

.white {
	font-family: "Liberation Sans", sans-serif;
	fill: #fff;
}

.blue { fill: #2f5aa8; }
.red { fill: #a3242b; }
.green { fill: #1a8d2f; }
.dim { fill: #999; }
.purple { fill: url(#g-purple); }
.azure { fill: url(#g-blue); stroke: #3a6ab5; stroke-width: 1px; }
.navy-w { fill: #1b4a9a; stroke: #1b4a9a; }
.glow { fill: #eef8ff; stroke: #a9d6f2; stroke-width: 4px; }
.outline { fill: #eef8ff; stroke: #4b93cb; }

.i8 { width: 8px; height: 8px; }
.i12 { width: 12px; height: 12px; }
.i14 { width: 14px; height: 14px; }
.i16 { width: 16px; height: 16px; }
.i30 { width: 30px; height: 30px; }
.caret { width: 5px; height: 3px; }
.flip { transform: rotate(180deg); opacity: .3; }
.arrow { width: 9px; height: 5px; }
.chev { width: 10px; height: 8px; }
.paste { width: 28px; height: 32px; }

/* Desktop */
.desktop {
	display: grid;
	grid-template-columns: 35fr 64fr;
	height: 100vh;
}

.monitor {
	display: grid;
	grid-template-rows: 23fr 120fr 25fr;
	min-width: 0;
}

.screen {
	grid-row: 2;
	display: flex;
	flex-direction: column;
	min-height: 0;
}

.window {
	display: flex;
	flex-direction: column;
	flex: 1;
	min-width: 0;
	min-height: 0;
}

/* Title bar */
.titlebar {
	height: 51px;
	background:
		radial-gradient(ellipse 50px 30px at 100% 85%, #4c86a0 40%, transparent),
		linear-gradient(90deg, rgba(200, 222, 232, .7), transparent 40px),
		linear-gradient(#2e6b8c, #3f7895 18%, #6b95a9 45%, #b9cdd6 70%, #eef3f6);
}

.titlebar.glass {
	background:
		radial-gradient(circle 50px at 95% 100%, rgba(255, 255, 255, .75) 60%, transparent),
		radial-gradient(ellipse 130px 20px at 83% 55%, rgba(225, 215, 218, .5) 20%, transparent),
		radial-gradient(circle 18px at 70% 75%, rgba(226, 110, 110, .4), transparent),
		radial-gradient(circle 22px at 65% 85%, rgba(255, 255, 255, .6), transparent),
		radial-gradient(circle 22px at 55% 85%, rgba(255, 255, 255, .6), transparent),
		radial-gradient(circle 26px at 51% 85%, rgba(255, 255, 255, .6), transparent),
		radial-gradient(circle 22px at 45% 85%, rgba(255, 255, 255, .6), transparent),
		radial-gradient(circle 22px at 40% 85%, rgba(255, 255, 255, .6), transparent),
		radial-gradient(circle 22px at 31% 85%, rgba(255, 255, 255, .6), transparent),
		linear-gradient(90deg, rgba(190, 210, 222, .6), transparent 60px),
		linear-gradient(#275773, #336380 25%, #6c8da0 50%, #b4c3cc 75%, #e3e8ec);
}

.caption {
	display: grid;
	grid-template-columns: 1fr auto 1fr;
	height: 24px;
}

.caption h1 {
	margin: 0;
	color: #111;
	font-size: 12px;
	font-weight: 400;
	line-height: 24px;
	text-shadow: 0 0 8px rgba(255, 255, 255, .8), 0 0 10px rgba(255, 255, 255, .6);
}

.quick {
	display: flex;
	align-items: center;
	gap: 2px;
	padding-left: 2px;
}

.quick .i16 {
	margin-right: 1px;
}

.bar {
	width: 1px;
	height: 14px;
	margin: 0 1px;
	background: #365668;
	box-shadow: 1px 0 rgba(255, 255, 255, .5);
}

.q {
	display: flex;
	align-items: center;
	justify-content: center;
	width: 20px;
	height: 20px;
}

.q:disabled {
	opacity: .6;
}

.q.slim {
	width: 10px;
}

.sys {
	display: flex;
	justify-self: end;
	height: 18px;
	margin-right: 3px;
	border: 1px solid #a9c3d0;
	border-top: 0;
	border-radius: 0 0 5px 5px;
	overflow: hidden;
}

.sys button {
	display: flex;
	align-items: center;
	justify-content: center;
	width: 27px;
	border-right: 1px solid #a9c3d0;
}

.sys .x {
	width: 47px;
	border-right: 0;
}

.sys.active {
	border-color: #2b3540;
	background: linear-gradient(#b6bec6, #7c8894 48%, #4b5b69 52%, #8798a6);
	box-shadow: 0 0 0 1px rgba(255, 255, 255, .5);
}

.sys.active .x {
	background: linear-gradient(#dd9c90, #c95f4d 48%, #a92c18 52%, #d2694a);
}

/* Tabs */
.tabs {
	display: flex;
	align-items: stretch;
	height: 27px;
}

.file {
	width: 56px;
	margin-right: 3px;
	border: 1px solid #1c4790;
	border-radius: 3px 3px 0 0;
	background: linear-gradient(#3b74c6, #2258b0 50%, #2a68c8);
	color: #fff;
}

.tab {
	padding: 0 14px;
}

.tab.active {
	margin: 0 1px;
	padding: 0 12px;
	border: 1px solid #b5c3d4;
	border-bottom: 0;
	border-radius: 3px 3px 0 0;
	background: linear-gradient(#fbfdff, #eef4fb);
}

.tab-right {
	display: flex;
	align-items: center;
	gap: 6px;
	margin-left: auto;
	padding-right: 1px;
}

/* Ribbon */
.ribbon {
	display: flex;
	height: 103px;
	border-top: 1px solid #a3b4c8;
	border-bottom: 1px solid #8493a8;
	background: linear-gradient(#eef5fd, #e0eaf6 50%, #d6e2f1);
}

.group {
	display: flex;
	flex-direction: column;
	border-right: 1px solid #a8b9ce;
	box-shadow: 1px 0 #f7fafe;
}

.body {
	display: flex;
	flex: 1;
}

.rows {
	display: flex;
	flex: 1;
	flex-direction: column;
	gap: 8px;
	padding: 12px 0 0 5px;
}

.row {
	display: flex;
	align-items: center;
	height: 26px;
}

.label {
	display: flex;
	align-items: center;
	height: 20px;
	color: #47597a;
}

.label span {
	flex: 1;
	text-align: center;
}

.label svg {
	margin: 0 5px;
}

.clipboard { width: 72px; }
.wide .clipboard { width: 112px; }
.font { width: 318px; }
.para { width: 269px; }
.edit { width: 68px; }
.styles { width: 299px; }
.wide .styles { flex: 0 1 1091px; min-width: 0; }

.para .rows {
	padding-left: 4px;
}

.align {
	display: flex;
	gap: 1px;
}

.big {
	display: flex;
	flex-direction: column;
	align-items: center;
	width: 49px;
	padding-top: 5px;
}

.big span {
	padding: 5px 0 6px;
}

.big.change {
	width: 59px;
	padding-top: 6px;
}

.stack {
	display: flex;
	flex-direction: column;
	padding-top: 4px;
}

.stack button {
	display: flex;
	align-items: center;
	gap: 3px;
	height: 25px;
}

.stack button:disabled {
	color: #8d9bb0;
}

.combo {
	position: relative;
	height: 26px;
	border: 1px solid #a9bfd8;
	background: #f1f6fc;
	color: #000;
}

.combo select {
	appearance: none;
	width: 100%;
	height: 22px;
	padding-left: 2px;
	padding-right: 15px;
	overflow: hidden;
	text-overflow: clip;
}

.combo .caret {
	position: absolute;
	top: 11px;
	right: 5px;
}

.face { width: 92px; }
.size { width: 54px; margin-left: -1px; }

.tool {
	display: flex;
	align-items: center;
	justify-content: center;
	width: 23px;
	height: 22px;
}

.tool svg:first-child {
	width: 20px;
	height: 20px;
}

.split {
	justify-content: flex-start;
	gap: 4px;
	width: 35px;
	padding-left: 1px;
}

.menu {
	justify-content: flex-start;
	width: 33px;
	padding-left: 3px;
}

.tool.on {
	border: 1px solid #c29a37;
	border-radius: 2px;
	background: linear-gradient(#fbe08a, #f7cb52 50%, #fde27e);
}

.sep {
	width: 1px;
	height: 22px;
	margin: 0 3px;
	background: linear-gradient(transparent, #a3b5cb, transparent);
}

.font .sep {
	margin-right: 4px;
}

/* Style gallery */
.gallery {
	display: flex;
	height: 59px;
	margin: 5px 0 0 6px;
	border: 1px solid #b1c3d9;
	border-radius: 2px;
	background: #edf4fc;
}

.style {
	width: 72px;
	padding: 4px;
}

.style.on {
	padding: 2px;
	border: 2px solid #e5b53d;
	border-radius: 3px;
	background: #fbe492;
	outline: 1px solid #c49b3c;
	outline-offset: -1px;
}

.card {
	display: flex;
	flex-direction: column;
	height: 49px;
	background: #fff;
}

.card b {
	height: 32px;
	margin: 0 3px;
	overflow: hidden;
	color: #000;
	font-weight: 400;
	line-height: 32px;
	text-align: left;
	white-space: nowrap;
}

.card span {
	text-align: center;
	white-space: nowrap;
}

.card small {
	font-size: 9px;
}

.s-normal { font-size: 12px; }
.card .s-h1 { font-size: 23px; font-weight: 700; line-height: 28px; }
.card .s-h2 { font-family: "Liberation Serif", serif; font-size: 20px; font-weight: 700; }
.s-it { font-style: italic; }
.card .s-strong { font-size: 11px; font-weight: 700; }
.card .gray { color: #8b8b8b; }
.card .navy { color: #3f72ad; }
.card .s-caps { color: #b2403d; font-size: 13px; font-variant: small-caps; }
.line { text-decoration: underline; text-underline-offset: 3px; }

.scroller {
	display: flex;
	flex-direction: column;
	width: 15px;
	border-left: 1px solid #b1c3d9;
}

.scroller button {
	display: flex;
	flex: 1;
	align-items: center;
	justify-content: center;
	border-bottom: 1px solid #b1c3d9;
}

.scroller .more {
	flex-direction: column;
	gap: 2px;
	border-bottom: 0;
}

.more::before {
	content: "";
	width: 7px;
	height: 1px;
	background: #4f5d70;
}

.list {
	flex-direction: column;
	padding: 2px 0 0 8px;
}

.list button {
	display: flex;
	align-items: center;
	gap: 4px;
	height: 22px;
}

/* Document area */
.workspace {
	display: flex;
	flex: 1;
	min-height: 0;
	background: linear-gradient(#c8daf0, #a6bcd8 45%, #849fbe);
}

.canvas {
	display: flex;
	flex: 1;
	justify-content: center;
	align-items: flex-start;
	gap: 14px;
	padding: 24px 0 0 3px;
	overflow: hidden;
}

.two-up {
	padding-top: 23px;
}

.page {
	display: grid;
	grid-template-columns: auto auto;
	grid-template-rows: auto 1fr auto;
	justify-content: space-between;
	width: 794px;
	height: 1123px;
	padding: 72px 95px;
	background: #fff;
	box-shadow: 0 0 0 1px #8fa3bb, 1px 1px 8px 2px rgba(50, 70, 100, .55);
}

.mark {
	width: 25px;
	height: 25px;
	border: 0 solid #a9a9a9;
}

.tl { border-width: 0 1px 1px 0; }
.tr { border-width: 0 0 1px 1px; }
.bl { border-width: 1px 1px 0 0; }
.br { border-width: 1px 0 0 1px; }

.pilcrow {
	grid-column: 1 / 3;
	margin: 2px 0 0 25px;
	color: #555;
	font-size: 10px;
}

.small {
	width: 670px;
	height: 947px;
	padding: 60px 80px;
}

.small .mark {
	width: 21px;
	height: 21px;
}

.small .pilcrow {
	margin-left: 21px;
}

.cursor {
	display: block;
	width: 2px;
	height: 15px;
	background: #000;
}

.slot {
	width: 670px;
}

/* Scroll bar */
.vscroll {
	display: flex;
	flex-direction: column;
	align-items: stretch;
	width: 17px;
	margin-top: 4px;
	background: #b5c9e3;
}

.vscroll button {
	display: flex;
	align-items: center;
	justify-content: center;
	width: 17px;
	height: 17px;
}

.split-bar {
	height: 2px;
	margin: 1px 4px 0;
	background: #566b8a;
}

.vscroll .ruler {
	height: 20px;
	border-bottom: 1px solid #93a9c6;
}

.track {
	flex: 1;
	background: linear-gradient(90deg, #adc1dd, #bccfe8);
}

.browse {
	padding-bottom: 1px;
	border-top: 1px solid #93a9c6;
}

/* Status bar */
.status {
	display: flex;
	align-items: center;
	height: 22px;
	border-top: 1px solid #eef4fb;
	background: linear-gradient(#dde7f4, #c2d0e4 50%, #b2c2d9);
}

.cell {
	display: flex;
	align-items: center;
	height: 20px;
	padding: 0 9px;
	border-right: 1px solid #8497b1;
	box-shadow: 1px 0 #e8eff8;
}

.lang {
	gap: 18px;
}

.views {
	display: flex;
	margin-left: auto;
	padding-left: 4px;
	border-left: 1px solid #8497b1;
}

.views button {
	display: flex;
	align-items: center;
	justify-content: center;
	width: 18px;
	height: 20px;
}

.views .on {
	width: 20px;
	border: 1px solid #b98c2a;
	border-radius: 2px;
	background: #fbdc7c;
}

.percent {
	width: 50px;
	padding-left: 12px;
}

.round {
	position: relative;
	width: 16px;
	height: 16px;
	border: 1px solid #56657a;
	border-radius: 50%;
	background: #eef2f8;
}

.round::before, .plus::after {
	content: "";
	position: absolute;
	top: 6px;
	left: 3px;
	width: 8px;
	height: 2px;
	background: #3e4856;
}

.plus::after {
	transform: rotate(90deg);
}

.plus {
	margin-right: 4px;
}

.zoom {
	appearance: none;
	width: 100px;
	height: 16px;
	margin: 0;
	background: linear-gradient(#7386a0, #7386a0) center / 100% 1px no-repeat;
}

.zoom.tick {
	background: linear-gradient(#7386a0, #7386a0) center / 100% 1px no-repeat, linear-gradient(#7386a0, #7386a0) center / 1px 8px no-repeat;
}

.zoom::-webkit-slider-thumb {
	appearance: none;
	width: 9px;
	height: 13px;
	border: 1px solid #56657a;
	border-radius: 1px 1px 5px 5px;
	background: #f0f4fa;
}

/* Taskbar */
.taskbar {
	display: flex;
	align-items: stretch;
	gap: 4px;
	height: 40px;
	border-top: 1px solid #16303f;
	background: linear-gradient(90deg, #1f4a66, #2c6080 20%, #2f6282 45%, #27546f 70%, #35698a 86%, #1c4258 90%, #1e445b);
}

.taskbar button {
	display: flex;
	align-items: center;
	justify-content: center;
}

.start {
	width: 55px;
}

.start svg {
	width: 38px;
	height: 38px;
}

.task {
	width: 58px;
	border: 1px solid #9fb8c6;
	border-radius: 3px;
	background: linear-gradient(135deg, rgba(255, 255, 255, .45), rgba(255, 255, 255, .12) 50%, rgba(255, 255, 255, .25));
}

.task svg {
	width: 32px;
	height: 32px;
}

.task.plain {
	border-color: transparent;
	background: none;
}

.task.many {
	border-right: 4px double #9fb8c6;
}

.task.current {
	background: linear-gradient(135deg, rgba(255, 255, 255, .85), rgba(255, 255, 255, .4) 50%, rgba(255, 255, 255, .65));
}

.tray {
	display: flex;
	align-items: center;
	margin-left: auto;
	color: #fff;
}

.icons {
	display: flex;
	align-items: center;
	gap: 9px;
	margin-right: 7px;
}

.langbar {
	width: 10px;
	height: 22px;
}

.clock {
	width: 77px;
	line-height: 18px;
	text-align: center;
}

.peek {
	align-self: stretch;
	width: 14px;
	border: 1px solid #7d98a8;
	background: linear-gradient(135deg, #6a8799, #27485c 50%, #1d3c50);
}

.watermark {
	grid-row: 3;
	align-self: end;
	justify-self: end;
	margin: 0 19px 4px;
	color: #fff;
	font: 700 16px/18px "DejaVu Sans", "Noto Sans CJK SC", sans-serif;
	-webkit-text-stroke: 2px #d93636;
	paint-order: stroke;
}
```
